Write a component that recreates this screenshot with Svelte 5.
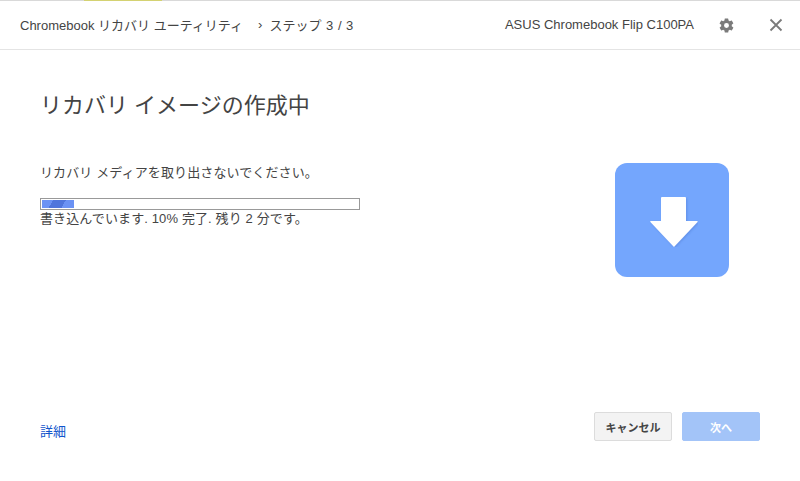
<script lang="ts">
  let percent = 10;
  let remaining = 2;
</script>

<div class="window">
  <div class="strip"><span class="mark"></span></div>
  <header class="titlebar">
    <div class="crumbs">
      <span class="app">Chromebook リカバリ ユーティリティ</span>
      <span class="chev">›</span>
      <span class="step">ステップ 3 / 3</span>
    </div>
    <span class="device">ASUS Chromebook Flip C100PA</span>
    <button class="icon gear" aria-label="設定">
      <svg width="17" height="17" viewBox="0 0 24 24">
        <path fill="#7b7b7b" d="M19.4 13c.04-.32.07-.66.07-1s-.03-.68-.07-1l2.1-1.65c.2-.15.25-.42.13-.64l-2-3.46c-.12-.22-.39-.3-.61-.22l-2.49 1c-.52-.4-1.08-.73-1.69-.98l-.38-2.65A.49.49 0 0 0 14 2h-4c-.25 0-.46.18-.49.42l-.38 2.65c-.61.25-1.17.59-1.69.98l-2.49-1c-.23-.09-.49 0-.61.22l-2 3.46c-.13.22-.07.49.12.64L4.57 11c-.04.32-.07.66-.07 1s.03.68.07 1l-2.11 1.65c-.19.15-.24.42-.12.64l2 3.46c.12.22.39.3.61.22l2.49-1c.52.4 1.08.73 1.69.98l.38 2.65c.03.24.24.42.49.42h4c.25 0 .46-.18.49-.42l.38-2.65c.61-.25 1.17-.59 1.69-.98l2.49 1c.23.09.49 0 .61-.22l2-3.46c.12-.22.07-.49-.12-.64L19.4 13zM12 15.5a3.5 3.5 0 1 1 0-7 3.5 3.5 0 0 1 0 7z"/>
      </svg>
    </button>
    <button class="icon close" aria-label="閉じる">
      <svg width="14" height="14" viewBox="0 0 14 14">
        <path d="M1.5 1.5l11 11M12.5 1.5l-11 11" stroke="#7b7b7b" stroke-width="1.8" fill="none"/>
      </svg>
    </button>
  </header>

  <main class="content">
    <h1>リカバリ イメージの作成中</h1>
    <div class="body">
      <div class="status">
        <p class="warn">リカバリ メディアを取り出さないでください。</p>
        <div class="progress"><div class="bar" style="width: {percent}%"></div></div>
        <p class="detail">書き込んでいます. {percent}% 完了. 残り {remaining} 分です。</p>
      </div>
      <div class="tile">
        <svg width="48" height="50" viewBox="0 0 48 50">
          <defs>
            <filter id="soft" x="-20%" y="-20%" width="140%" height="140%">
              <feDropShadow dx="1" dy="1" stdDeviation="1" flood-color="#3a68c0" flood-opacity="0.35"/>
            </filter>
          </defs>
          <path filter="url(#soft)" fill="#fff" d="M12 0h23a1 1 0 0 1 1 1v23h11c.6 0 .8.6.5 1L24.4 49.6a.6.6 0 0 1-.9 0L.4 25c-.3-.4-.1-1 .5-1H11V1a1 1 0 0 1 1-1z"/>
        </svg>
      </div>
    </div>
    <footer class="actions">
      <a href="#details" class="more">詳細</a>
      <button class="btn cancel">キャンセル</button>
      <button class="btn next" disabled>次へ</button>
    </footer>
  </main>
</div>

<style>
  :global(body) { background: #fff; }
  .window { width: 800px; height: 481px; display: flex; flex-direction: column; overflow: hidden; font-family: "Liberation Sans", "Noto Sans CJK JP", sans-serif; color: #444; }
  .strip { height: 1px; background: #d9d9d9; flex: none; }
  .mark { display: block; width: 78px; height: 1px; margin-left: 84px; background: #d4d272; }
  .titlebar { height: 48px; flex: none; display: flex; align-items: center; padding: 0 17px 0 20px; border-bottom: 1px solid #e4e4e4; font-size: 13px; color: #444; }
  .crumbs { flex: 1; display: flex; align-items: center; margin-top: -1px; }
  .chev { margin: 0 7px 0 15px; font-size: 13px; }
  .step { word-spacing: 1px; }
  .device { margin-right: 24px; margin-top: -2px; }
  .icon { padding: 0; border: 0; background: none; display: flex; cursor: pointer; }
  .gear { margin-right: 34px; }
  .content { flex: 1; display: flex; flex-direction: column; padding: 0 40px 0 40px; }
  h1 { margin: 40px 0 0; font-size: 22px; font-weight: 400; line-height: 32px; color: #444; }
  .body { display: flex; justify-content: space-between; padding-right: 31px; }
  .status { width: 320px; padding-top: 42px; font-size: 13px; }
  p { margin: 0; line-height: 18px; white-space: nowrap; letter-spacing: 0.12px; }
  .progress { height: 12px; margin-top: 16px; box-sizing: border-box; padding: 1px; border: 1px solid #999; background: #fff; }
  .bar { height: 100%; background: repeating-linear-gradient(-60deg, #6b92f4 0 11px, #4f75dc 11px 22px); }
  .tile { width: 114px; height: 114px; margin-top: 41px; box-sizing: border-box; padding: 34px 0 0 35px; border-radius: 12px; background: #74a6fd; }
  .tile svg { display: block; }
  .actions { margin-top: auto; margin-bottom: 40px; display: flex; align-items: center; gap: 10px; }
  .more { margin-right: auto; margin-top: 8px; color: #1155cc; font-size: 13px; text-decoration: none; }
  .btn { width: 78px; height: 29px; padding: 0; border-radius: 2px; font: inherit; font-size: 11px; font-weight: 700; }
  .cancel { border: 1px solid #dcdcdc; background: #f3f3f3; color: #444; }
  .next { border: 1px solid #a3c4f8; background: #a3c4f8; color: #fff; }
</style>
